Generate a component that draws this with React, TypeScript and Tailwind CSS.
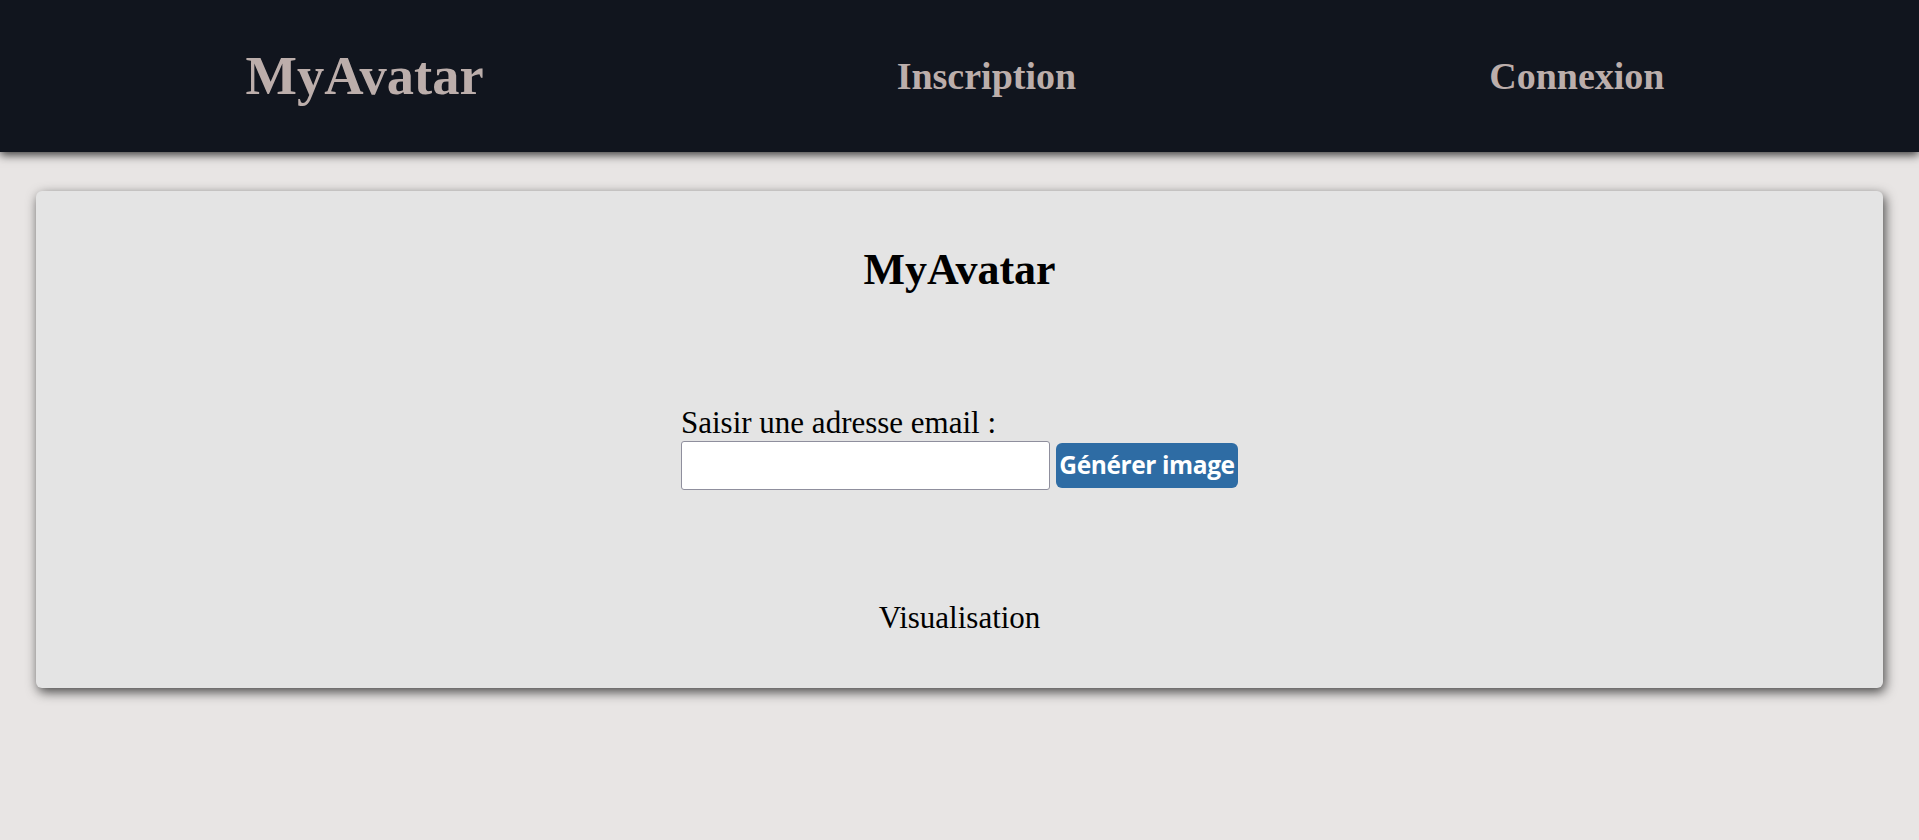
import React from 'react';

const serif = { fontFamily: '"Liberation Serif", "Times New Roman", serif' };

const NavBar: React.FC = () => {
  return (
    <header className="relative z-10 h-[152px] bg-[#11151e] shadow-[0_3px_9px_rgba(0,0,0,0.75)]">
      <nav className="flex h-full items-center justify-around pl-[39px] pr-[48px] text-[#bcaeab]" style={serif}>
        <span className="text-[54.5px] font-bold leading-none">MyAvatar</span>
        <a href="#" className="text-[38px] font-bold leading-none">Inscription</a>
        <a href="#" className="text-[38px] font-bold leading-none">Connexion</a>
      </nav>
    </header>
  );
};

const AvatarCard: React.FC = () => {
  return (
    <section
      className="mx-[36px] mt-[39px] flex flex-col items-center rounded-[6px] bg-[#e4e4e4] pb-[55px] pt-[57px] text-black shadow-[2px_4px_12px_rgba(0,0,0,0.7)]"
      style={serif}
    >
      <h1 className="text-[44px] font-bold leading-[44px]">MyAvatar</h1>

      {/* email form */}
      <form className="mt-[115px] flex flex-col" onSubmit={(e) => e.preventDefault()}>
        <label htmlFor="email" className="text-[31px] leading-[31px]">
          Saisir une adresse email :
        </label>
        <div className="mt-[3px] flex items-center gap-[6px]">
          <input
            id="email"
            type="email"
            className="h-[49px] w-[369px] rounded-[3px] border border-[#8f8f9d] bg-white px-2"
          />
          <button
            type="submit"
            className="h-[45px] w-[182px] rounded-[6px] bg-[#2e6ca4] text-[24.5px] font-bold leading-none tracking-[-0.4px] text-white"
            style={{ fontFamily: '"Open Sans", "Noto Sans", sans-serif' }}
          >
            Générer image
          </button>
        </div>
      </form>

      <p className="mt-[112px] text-[31px] leading-[31px]">Visualisation</p>
    </section>
  );
};

export default function App() {
  return (
    <div className="min-h-[840px] bg-[#e8e5e4]">
      <NavBar />
      <AvatarCard />
    </div>
  );
}
